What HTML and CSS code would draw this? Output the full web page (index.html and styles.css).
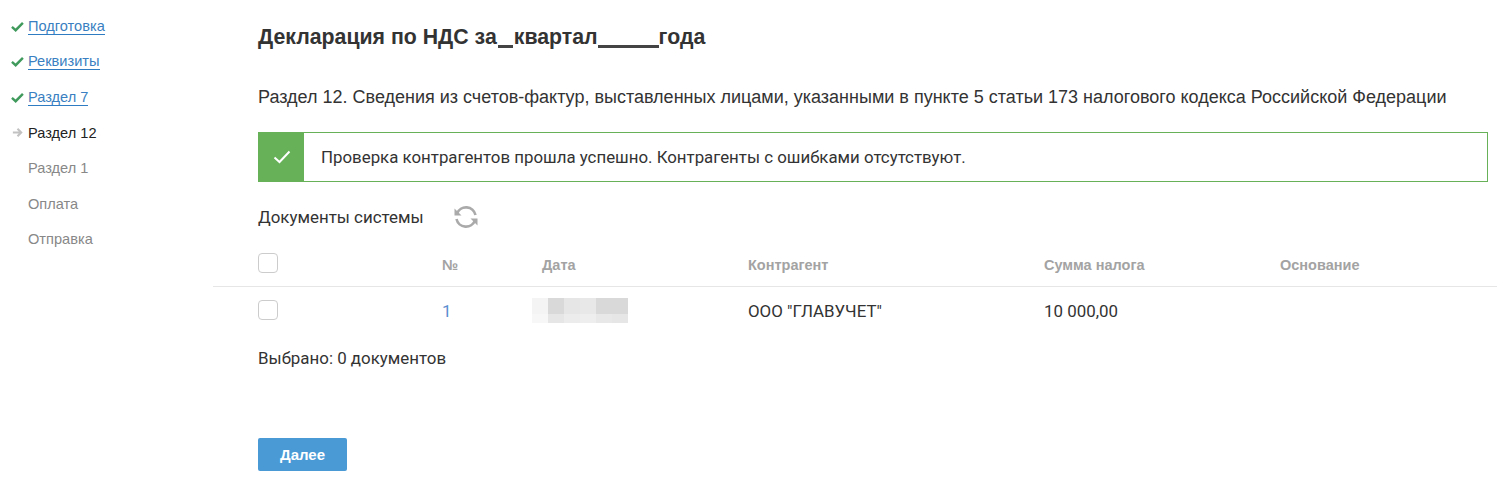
FILE: index.html
```html
<!DOCTYPE html>
<html lang="ru">
<head>
    <meta charset="UTF-8">
    <title>Декларация по НДС</title>
    <link rel="stylesheet" href="styles.css">
</head>
<body>
    <div class="page">
        <ul class="steps">
            <li class="step">
                <svg class="step-icon" viewBox="0 0 14 14"><path d="M1 7.5 L5 11 L12.8 3" fill="none" stroke="#3f9a5c" stroke-width="2.6"/></svg>
                <a href="#">Подготовка</a>
            </li>
            <li class="step">
                <svg class="step-icon" viewBox="0 0 14 14"><path d="M1 7.5 L5 11 L12.8 3" fill="none" stroke="#3f9a5c" stroke-width="2.6"/></svg>
                <a href="#">Реквизиты</a>
            </li>
            <li class="step">
                <svg class="step-icon" viewBox="0 0 14 14"><path d="M1 7.5 L5 11 L12.8 3" fill="none" stroke="#3f9a5c" stroke-width="2.6"/></svg>
                <a href="#">Раздел 7</a>
            </li>
            <li class="step current">
                <svg class="step-icon" viewBox="0 0 14 14"><path d="M2 7 H10.5 M7 3 L11 7 L7 11" fill="none" stroke="#c2c2c2" stroke-width="2.2"/></svg>
                <span>Раздел 12</span>
            </li>
            <li class="step"><span class="step-icon"></span><span>Раздел 1</span></li>
            <li class="step"><span class="step-icon"></span><span>Оплата</span></li>
            <li class="step"><span class="step-icon"></span><span>Отправка</span></li>
        </ul>

        <div class="content">
            <h1>Декларация по НДС за<span class="blank short"></span>квартал<span class="blank long"></span>года</h1>
            <h2>Раздел 12. Сведения из счетов-фактур, выставленных лицами, указанными в пункте 5 статьи 173 налогового кодекса Российской Федерации</h2>

            <div class="alert">
                <div class="alert-icon">
                    <svg viewBox="0 0 18 14" width="18" height="14"><path d="M1.5 7.5 L6.5 12 L16.5 1.5" fill="none" stroke="#fff" stroke-width="2"/></svg>
                </div>
                <div class="alert-text">Проверка контрагентов прошла успешно. Контрагенты с ошибками отсутствуют.</div>
            </div>

            <div class="docs-head">
                <span>Документы системы</span>
                <svg class="refresh" viewBox="0 0 24 24" width="24" height="24">
                    <path d="M3 8.5 A9.7 9.7 0 0 1 21.5 10" fill="none" stroke="#aaa" stroke-width="2.6"/>
                    <path d="M21 15.5 A9.7 9.7 0 0 1 2.5 14" fill="none" stroke="#aaa" stroke-width="2.6"/>
                    <path d="M0.5 3.5 V10.5 H7.5 Z" fill="#aaa"/>
                    <path d="M23.5 20.5 V13.5 H16.5 Z" fill="#aaa"/>
                </svg>
            </div>

            <div class="row row-head">
                <div class="col-check"><span class="checkbox"></span></div>
                <div class="col-num">№</div>
                <div class="col-date">Дата</div>
                <div class="col-agent">Контрагент</div>
                <div class="col-sum">Сумма налога</div>
                <div class="col-base">Основание</div>
            </div>
            <div class="row row-body">
                <div class="col-check"><span class="checkbox"></span></div>
                <div class="col-num"><a href="#">1</a></div>
                <div class="col-date">
                    <div class="blurred">
                        <i class="shade-f4"></i><i class="shade-d9"></i><i class="shade-e6"></i>
                        <i class="shade-e8"></i><i class="shade-d9"></i><i class="shade-d9"></i>
                        <i class="shade-f7"></i><i class="shade-e6"></i><i class="shade-ec"></i>
                        <i class="shade-ee"></i><i class="shade-e8"></i><i class="shade-e6"></i>
                    </div>
                </div>
                <div class="col-agent">ООО "ГЛАВУЧЕТ"</div>
                <div class="col-sum">10 000,00</div>
                <div class="col-base"></div>
            </div>

            <p class="selected">Выбрано: 0 документов</p>
            <button class="next">Далее</button>
        </div>
    </div>
</body>
</html>
```

FILE: styles.css
```css
* {
    box-sizing: border-box;
}
body {
    margin: 0;
    background-color: #fff;
    color: #333;
    font-family: "Liberation Sans", Arial, sans-serif;
}
.page {
    display: flex;
    height: 481px;
    overflow: hidden;
}
.steps {
    width: 213px;
    flex-shrink: 0;
    list-style: none;
    margin: 0;
    padding: 9.5px 0 0 11px;
    font-size: 14.6px;
    color: #888;
}
.step {
    display: flex;
    align-items: center;
    height: 35.5px;
    gap: 4px;
    padding-bottom: 2px;
}
.step a {
    color: #3a7fc1;
    text-decoration: none;
    border-bottom: 1px solid #2f7cc3;
    line-height: 16px;
}
.step.current {
    color: #222;
}
.step-icon {
    width: 13px;
    height: 13px;
    flex-shrink: 0;
}
.content {
    flex: 1;
    padding-top: 24px;
}
h1 {
    margin: 0 0 0 45px;
    font-size: 21.3px;
    line-height: 26px;
    font-weight: bold;
    color: #333;
}
.blank {
    display: inline-block;
    height: 3px;
    background-color: #444;
    vertical-align: -4px;
}
.blank.short {
    width: 15px;
    margin: 0 1px;
}
.blank.long {
    width: 61px;
}
h2 {
    margin: 37px 0 0 45px;
    font-size: 18px;
    line-height: 20px;
    font-weight: normal;
    color: #333;
}
.alert {
    display: flex;
    height: 50px;
    margin: 25px 9px 0 45px;
    border: 1px solid #67b158;
}
.alert-icon {
    width: 45px;
    background-color: #67b158;
    display: flex;
    align-items: center;
    justify-content: center;
}
.alert-text {
    padding-left: 17px;
    font-family: Roboto, sans-serif;
    font-size: 16.85px;
    line-height: 48px;
    color: #333;
}
.docs-head {
    display: flex;
    align-items: center;
    height: 36px;
    margin: 17px 0 0 45px;
    font-family: Roboto, sans-serif;
    font-size: 16.9px;
    gap: 30px;
}
.refresh {
    flex-shrink: 0;
}
.row {
    display: flex;
    font-family: Roboto, sans-serif;
    font-size: 16.9px;
    padding-left: 45px;
}
.row-head {
    height: 38px;
    margin-top: 14px;
    align-items: center;
    font-family: "Liberation Sans", Arial, sans-serif;
    font-size: 14.5px;
    font-weight: bold;
    color: #a3a3a3;
    border-bottom: 1px solid #e6e6e6;
    padding-bottom: 5px;
}
.row-body {
    height: 47px;
    align-items: center;
}
.col-check {
    width: 184px;
    display: flex;
}
.col-num {
    width: 100px;
}
.col-num a {
    color: #5b8fd0;
    text-decoration: none;
}
.col-date {
    width: 206px;
}
.col-agent {
    width: 296px;
}
.col-sum {
    width: 236px;
}
.checkbox {
    display: block;
    width: 20px;
    height: 20px;
    margin-top: -2px;
    border: 1px solid #ccc;
    border-radius: 4px;
    background-color: #fff;
}
.row-head .checkbox {
    margin-top: -4px;
}
.blurred {
    display: grid;
    grid-template-columns: repeat(6, 16px);
    grid-template-rows: 16px 9px;
    margin-left: -10px;
}
.blurred i {
    display: block;
}
.shade-d9 { background-color: #d9d9d9; }
.shade-e6 { background-color: #e6e6e6; }
.shade-e8 { background-color: #e8e8e8; }
.shade-ec { background-color: #ececec; }
.shade-ee { background-color: #eeeeee; }
.shade-f4 { background-color: #f4f4f4; }
.shade-f7 { background-color: #f7f7f7; }
.selected {
    margin: 0 0 0 45px;
    padding-top: 14px;
    font-family: Roboto, sans-serif;
    font-size: 16.9px;
    line-height: 20px;
}
.next {
    display: block;
    margin: 70px 0 0 45px;
    width: 89px;
    height: 33px;
    border: none;
    border-radius: 2px;
    background-color: #4a9ad6;
    color: #fff;
    font-family: "Liberation Sans", Arial, sans-serif;
    font-size: 15px;
    font-weight: bold;
}
```
